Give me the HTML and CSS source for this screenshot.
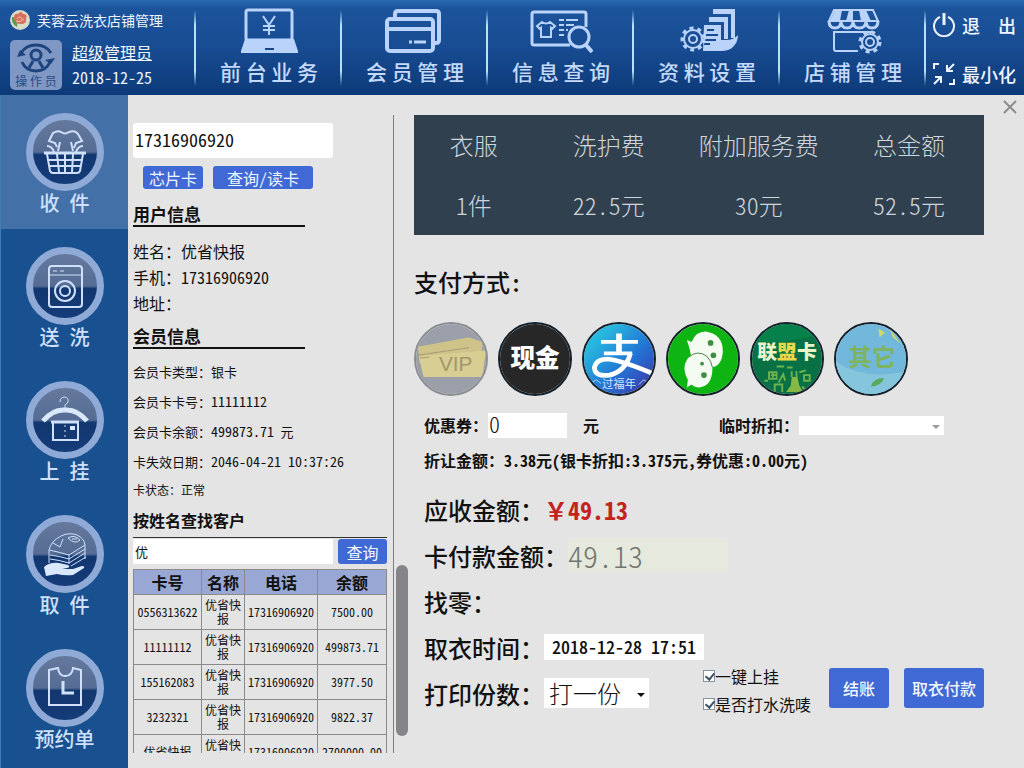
FILE: index.html
```html
<!DOCTYPE html>
<html lang="zh-CN">
<head>
    <meta charset="UTF-8">
    <meta name="viewport" content="width=device-width, initial-scale=1.0">
    <title>芙蓉云洗衣店铺管理</title>
    <link rel="stylesheet" href="styles.css">
</head>
<body>
    <header class="header">
        <div class="brand">
            <div class="brand-title">
                <svg class="brand-logo" viewBox="0 0 20 20">
                    <circle cx="10" cy="10" r="10" fill="#d9dccb"/>
                    <path d="M2 7 Q1 14 7 17 L8 8Z" fill="#5d9a52"/>
                    <path d="M4 8 Q4 3 8 4 Q11 0 13 4 Q18 4 16 9 Q17 14 11 14 Q5 14 4 8Z" fill="#d8705c"/>
                    <path d="M7 9 Q10 5 12 9 M6 11 Q10 13 14 9" fill="none" stroke="#f4c5b5"/>
                </svg>
                <span>芙蓉云洗衣店铺管理</span>
            </div>
            <div class="user">
                <div class="badge">
                    <svg viewBox="0 0 40 30">
                        <g fill="none" stroke="#1d447f" stroke-width="3">
                            <circle cx="20" cy="12" r="5"/>
                            <path d="M5 10 Q10 2 20 2 Q30 2 35 10"/>
                            <path d="M6 19 Q10 28 20 28 Q30 28 34 19"/>
                            <path d="M13 25 L17 18 M27 25 L23 18"/>
                        </g>
                        <path d="M1 14 L4 7 L10 12Z M39 15 L35 21 L29 17Z" fill="#1d447f"/>
                    </svg>
                    <span>操 作 员</span>
                </div>
                <div class="user-info">
                    <a href="#">超级管理员</a>
                    <span>2018-12-25</span>
                </div>
            </div>
        </div>
        <nav class="nav">
            <a href="#">
                <svg viewBox="0 0 64 48">
                    <rect x="9" y="2" width="46" height="30" rx="2" class="line"/>
                    <path d="M8 31 H57 L61 43 V45 H4 V43Z" class="solid"/>
                    <path d="M28 41 H37" stroke="#164788" stroke-width="2"/>
                    <path d="M26 8 L32 17 L38 8 M32 17 V27 M26 18 H38 M26 22 H38" class="line thin"/>
                </svg>
                <span>前 台 业 务</span>
            </a>
            <a href="#">
                <svg viewBox="0 0 64 48">
                    <path d="M12 9 V6 Q12 3 15 3 H53 Q56 3 56 6 V32 Q56 35 53 35 H51" class="line wide"/>
                    <rect x="4" y="11" width="46" height="32" rx="3" class="line wide"/>
                    <path d="M4 21 H50" class="line wide"/>
                    <path d="M26 34 H29 M31 34 H43" class="line"/>
                </svg>
                <span>会 员 管 理</span>
            </a>
            <a href="#">
                <svg viewBox="0 0 64 48">
                    <path d="M41 37 H5 Q3 37 3 35 V6 Q3 4 5 4 H55 Q57 4 57 6 V19" class="line"/>
                    <path d="M13 14 Q17 17 21 14 L26 18 L23 21 L22 20 V29 H12 V20 L11 21 L8 18Z" class="line thin"/>
                    <path d="M30 12 H35 M37 12 H49 M30 17 H35 M37 17 H45 M30 22 H35 M30 27 H35 M37 22 H39" class="line thin"/>
                    <circle cx="50" cy="29" r="10" class="line"/>
                    <path d="M57 37 L63 44" class="line wide"/>
                </svg>
                <span>信 息 查 询</span>
            </a>
            <a href="#">
                <svg viewBox="0 0 64 48">
                    <path d="M38 1 H60 V30 H56 V6 H38Z" class="solid"/>
                    <path d="M34 9 H53 V31 H49 V14 H34Z" class="solid"/>
                    <path d="M29 17 H46 V32 H51 Q59 32 63 27 Q63 34 58 39 Q54 43 46 43 H28Z" class="solid"/>
                    <path d="M32 22 H39 M31 27 H43 M29 32 H41 M29 36 H35" stroke="#174a8e" stroke-width="2"/>
                    <circle cx="18" cy="31" r="4" class="line thin"/>
                    <circle cx="18" cy="31" r="9" class="line thin"/>
                    <circle cx="18" cy="31" r="11" class="line teeth"/>
                </svg>
                <span>资 料 设 置</span>
            </a>
            <a href="#">
                <svg viewBox="0 0 64 48">
                    <path d="M13 2 H52 L57 13 H8Z" class="line thin"/>
                    <path d="M14 2 H21 L19 13 H9Z M28 2 H32 V13 H25Z M38 2 H45 L50 13 H40Z" class="solid"/>
                    <path d="M8 13 Q8 20 14 20 Q20 20 20 13 Q20 20 26 20 Q32 20 32 13 Q32 20 38 20 Q45 20 45 13 Q45 20 51 20 Q57 20 57 13" class="line"/>
                    <path d="M37 43 H15 Q13 43 13 41 V24 H52" class="line thin"/>
                    <circle cx="49" cy="34" r="8" class="line thin"/>
                    <circle cx="49" cy="34" r="4" class="line thin"/>
                    <circle cx="49" cy="34" r="10" class="line teeth"/>
                </svg>
                <span>店 铺 管 理</span>
            </a>
        </nav>
        <div class="window-actions">
            <button type="button">
                <svg viewBox="0 0 24 24" fill="none" stroke="#eef5ff" stroke-width="2">
                    <path d="M8 4 A10 10 0 1 0 16 4"/>
                    <path d="M12 0 V12" stroke-width="3"/>
                </svg>
                <span>退　出</span>
            </button>
            <button type="button">
                <svg viewBox="0 0 24 24" fill="none" stroke="#eef5ff" stroke-width="2">
                    <path d="M2 7 V2 H7 M22 17 V22 H17" stroke-width="2"/>
                    <path d="M22 2 L16 8 M15 3 V9 H21 M2 22 L8 16 M3 15 H9 V21"/>
                </svg>
                <span>最小化</span>
            </button>
        </div>
    </header>

    <div class="layout">
        <nav class="sidebar">
            <a href="#" class="active">
                <span class="disc">
                    <svg viewBox="0 0 48 48">
                        <path d="M16 19 L14 15 L8 13 L12 5 Q17 2 20 4 Q24 7 28 4 Q34 2 37 6 L41 13 L35 15 L33 20" class="line"/>
                        <path d="M19 14 L17 23 M30 14 L32 23 M6 18 Q11 18 13 24 M42 18 Q37 18 35 24" class="line"/>
                        <path d="M3 25 H45" class="line wide"/>
                        <path d="M6 26 L9 43 Q10 45 12 45 H36 Q38 45 39 43 L42 26 M16 26 L18 44 M24 26 V44 M32 26 L31 44 M8 32 H40 M9 38 H39" class="line"/>
                    </svg>
                </span>
                <span>收&ensp;件</span>
            </a>
            <a href="#">
                <span class="disc">
                    <svg viewBox="0 0 48 48">
                        <rect x="8" y="4" width="33" height="41" rx="3" class="line"/>
                        <path d="M8 13 H41 M12 9 H16 M19 9 H23" class="line thin"/>
                        <circle cx="24" cy="29" r="10" class="line"/>
                        <circle cx="24" cy="29" r="5" class="line"/>
                    </svg>
                </span>
                <span>送&ensp;洗</span>
            </a>
            <a href="#">
                <span class="disc">
                    <svg viewBox="0 0 48 48">
                        <path d="M19 6 Q19 1 24 1 Q28 2 27 6 Q26 8 24 9 V14" class="line thin"/>
                        <path d="M2 25 Q12 13 24 14 Q36 13 46 25" fill="none" stroke="#dae8fc" stroke-width="5"/>
                        <path d="M10 26 H38" class="line wide"/>
                        <path d="M12 26 V44 H37 V26" class="line"/>
                        <path d="M24 29 V41" class="line thin" stroke-dasharray="2 3"/>
                        <rect x="29" y="30" width="5" height="4" class="solid"/>
                    </svg>
                </span>
                <span>上&ensp;挂</span>
            </a>
            <a href="#">
                <span class="disc">
                    <svg viewBox="0 0 48 48">
                        <path d="M8 20 Q10 11 20 6 Q28 2 36 5 Q43 8 44 15 L28 25 Q18 22 8 20Z M12 13 L19 17 L22 9 M27 8 Q33 4 39 10 Q34 15 27 8 M31 9 H36" class="line thin"/>
                        <path d="M8 20 V33 M28 25 V34 M9 25 Q18 26 28 29 L44 19 M9 29 Q18 30 28 33 L44 23 M30 36 L45 27 M44 15 V29" class="line thin"/>
                        <path d="M3 37 Q9 32 18 33 L27 35 Q30 37 26 38 L21 39 L32 39 L41 36 Q44 36 43 38 L32 45 Q24 46 16 44 L5 46Z" class="solid"/>
                    </svg>
                </span>
                <span>取&ensp;件</span>
            </a>
            <a href="#">
                <span class="disc">
                    <svg viewBox="0 0 48 48">
                        <path d="M8 6 L17 4 Q18 12 24 12 Q31 12 32 4 L40 6 V41 H8Z" class="line"/>
                        <path d="M22 17 V29 H33" class="line wide"/>
                    </svg>
                </span>
                <span>预约单</span>
            </a>
        </nav>

        <main class="content">
            <button type="button" class="close" aria-label="关闭">
                <svg viewBox="0 0 14 14"><path d="M1 1 L13 13 M13 1 L1 13"/></svg>
            </button>

            <section class="customer">
                <input type="text" class="phone" value="17316906920" aria-label="手机号">
                <div class="card-buttons">
                    <button type="button" class="btn chip">芯片卡</button>
                    <button type="button" class="btn read">查询/读卡</button>
                </div>
                <h2>用户信息</h2>
                <ul class="user-list">
                    <li>姓名：优省快报</li>
                    <li>手机：17316906920</li>
                    <li>地址：</li>
                </ul>
                <h2>会员信息</h2>
                <ul class="card-list">
                    <li>会员卡类型：银卡</li>
                    <li>会员卡卡号：<span class="num">11111112</span></li>
                    <li>会员卡余额：<span class="num">499873.71</span> 元</li>
                    <li>卡失效日期：<span class="num">2046-04-21 10:37:26</span></li>
                    <li class="status">卡状态：正常</li>
                </ul>
                <h3><label for="customerName">按姓名查找客户</label></h3>
                <div class="search">
                    <input type="text" id="customerName" value="优">
                    <button type="button" class="btn">查询</button>
                </div>
                <table class="customers">
                    <thead>
                        <tr><th class="col-card">卡号</th><th class="col-name">名称</th><th class="col-phone">电话</th><th>余额</th></tr>
                    </thead>
                    <tbody>
                        <tr><td>0556313622</td><td>优省快报</td><td>17316906920</td><td>7500.00</td></tr>
                        <tr><td>11111112</td><td>优省快报</td><td>17316906920</td><td>499873.71</td></tr>
                        <tr><td>155162083</td><td>优省快报</td><td>17316906920</td><td>3977.50</td></tr>
                        <tr><td>3232321</td><td>优省快报</td><td>17316906920</td><td>9822.37</td></tr>
                        <tr><td>优省快报</td><td>优省快报</td><td>17316906920</td><td>2700000.00</td></tr>
                    </tbody>
                </table>
            </section>
            <div class="scroll-thumb"></div>

            <section class="checkout">
                <table class="summary">
                    <thead>
                        <tr><th class="col-count">衣服</th><th>洗护费</th><th>附加服务费</th><th>总金额</th></tr>
                    </thead>
                    <tbody>
                        <tr><td>1件</td><td>22.5元</td><td>30元</td><td>52.5元</td></tr>
                    </tbody>
                </table>

                <h1>支付方式:</h1>
                <div class="pay-methods">
                    <button type="button" class="vip">
                        <svg viewBox="0 0 74 74">
                            <rect width="74" height="74" fill="#9a9fa9"/>
                            <path d="M2 24 L56 14 L70 19 V40 L4 42Z" fill="#cfc389"/>
                            <path d="M3 34 L74 28 L70 56 L8 56Z" fill="#d8ce94"/>
                            <path d="M2 33 L56 25 M4 36 L14 35" stroke="#a39a77" fill="none"/>
                            <text x="42" y="50" text-anchor="middle" class="vip-text">VIP</text>
                        </svg>
                    </button>
                    <button type="button">
                        <svg viewBox="0 0 74 74">
                            <rect width="74" height="74" fill="#272727"/>
                            <text x="37" y="45" text-anchor="middle" class="cash-text">现金</text>
                        </svg>
                    </button>
                    <button type="button" aria-label="支付宝">
                        <svg viewBox="0 0 74 74">
                            <defs>
                                <linearGradient id="alipay" x1="0" y1="0" x2="1" y2="1">
                                    <stop offset="20%" stop-color="#27b8df"/>
                                    <stop offset="60%" stop-color="#2372d3"/>
                                    <stop offset="90%" stop-color="#3b3fae"/>
                                </linearGradient>
                            </defs>
                            <rect width="74" height="74" fill="url(#alipay)"/>
                            <g fill="none" stroke="#fff" stroke-width="5">
                                <path d="M37 10 V32" stroke-width="6"/>
                                <path d="M18 19 H57 M21 31 H51" stroke-width="4"/>
                                <path d="M49 31 Q44 50 27 54 Q11 56 11 46 Q13 37 25 37 Q38 38 72 52"/>
                            </g>
                            <path d="M8 62 L13 59 L18 63 M58 64 L63 59 L68 62" fill="none" stroke="#b6d2fa"/>
                            <text x="37" y="68" text-anchor="middle" class="alipay-text">过福年</text>
                        </svg>
                    </button>
                    <button type="button" aria-label="微信支付">
                        <svg viewBox="0 0 74 74">
                            <rect width="74" height="74" fill="#0eb512"/>
                            <path d="M20 17 L25 19 Q29 8 40 8 Q58 11 58 29 Q57 45 45 46 Q25 45 23 27Z" fill="#f4fbf1"/>
                            <path d="M20 67 L21 59 Q16 50 18 42 Q22 31 32 31 Q45 33 47 46 Q47 66 33 67 Q28 67 25 64Z" fill="#f4fbf1"/>
                            <path d="M22 35 Q31 27 41 34 Q46 39 47 46" fill="none" stroke="#477b46"/>
                            <g fill="#418d45"><circle cx="45" cy="20" r="3"/><circle cx="48" cy="33" r="3"/><circle cx="36" cy="42" r="2"/><circle cx="38" cy="54" r="3"/></g>
                        </svg>
                    </button>
                    <button type="button">
                        <svg viewBox="0 0 74 74">
                            <rect width="74" height="74" fill="#077044"/>
                            <path d="M0 0 H74 V10 Q37 22 0 18Z" fill="#06814c"/>
                            <text x="37" y="37" text-anchor="middle" class="union-text">联<tspan fill="#e5d94a">盟</tspan>卡</text>
                            <g fill="none" stroke="#6eb24f" stroke-width="2">
                                <path d="M26 45 H34 M37 46 H43 M18 51 H26 V58 H18Z M22 51 V58 M28 62 L33 53 L35 60 M50 51 L57 49 M55 54 H61 V60 H55Z M24 72 V64 H32 V72 M13 60 H17 M20 54 H25 M42 50 V56 M47 50 V56 M53 66 L58 72"/>
                            </g>
                            <path d="M36 72 L41 65 L42 56 H48 L50 65 L54 72Z" fill="#86b943"/>
                        </svg>
                    </button>
                    <button type="button">
                        <svg viewBox="0 0 74 74">
                            <rect width="74" height="74" fill="#72b7dc"/>
                            <path d="M0 74 V40 Q30 60 74 50 V74Z" fill="#86c6dc"/>
                            <path d="M45 5 L52 9 L46 14Z M57 5 L68 21 L60 14Z" fill="#cbdc64"/>
                            <path d="M37 66 Q39 57 51 57 Q47 66 37 66Z" fill="#5aa85c"/>
                            <text x="38" y="44" text-anchor="middle" class="other-text">其它</text>
                        </svg>
                    </button>
                </div>

                <form class="bill">
                    <div class="row coupon-row">
                        <label for="coupon">优惠券：</label>
                        <input type="text" id="coupon" value="0">
                        <span class="unit">元</span>
                        <label for="discount" class="discount-label">临时折扣：</label>
                        <div class="select discount">
                            <select id="discount"><option></option></select>
                        </div>
                    </div>
                    <p class="row discount-row">折让金额：3.38元(银卡折扣:3.375元,券优惠:0.00元)</p>
                    <div class="row"><span>应收金额：</span><strong class="due"><span class="full">￥</span>49.13</strong></div>
                    <div class="row">
                        <label for="cardPay">卡付款金额：</label>
                        <input type="text" id="cardPay" value="49.13" readonly>
                    </div>
                    <div class="row">找零：</div>
                    <div class="row">
                        <label for="pickup">取衣时间：</label>
                        <input type="text" id="pickup" value="2018-12-28 17:51">
                    </div>
                    <div class="row">
                        <label for="copies">打印份数：</label>
                        <div class="select copies">
                            <select id="copies"><option>打一份</option></select>
                        </div>
                        <div class="checks">
                            <label><input type="checkbox" checked>一键上挂</label>
                            <label><input type="checkbox" checked>是否打水洗唛</label>
                        </div>
                        <div class="submit">
                            <button type="button" class="btn settle">结账</button>
                            <button type="button" class="btn pay">取衣付款</button>
                        </div>
                    </div>
                </form>
            </section>
        </main>
    </div>
</body>
</html>
```
FILE: styles.css
```css
* {
    box-sizing: border-box;
}

body {
    margin: 0;
    height: 100vh;
    display: flex;
    flex-direction: column;
    overflow: hidden;
    background-color: #e4e4e4;
    color: #111;
    font-family: "Noto Sans CJK SC", sans-serif;
    font-size: 16px;
    /* half-width digits, so numbers line up with the characters */
    font-feature-settings: "hwid";
}

a {
    color: inherit;
    text-decoration: none;
}

button,
input,
select {
    font: inherit;
    font-feature-settings: inherit;
    color: inherit;
    border: none;
    margin: 0;
    padding: 0;
}

button {
    cursor: pointer;
}

h1, h2, h3, p, ul {
    margin: 0;
    padding: 0;
}

ul {
    list-style: none;
}

svg {
    display: block;
}

/* shared icon strokes */
.line {
    fill: none;
    stroke: #b9d3fa;
    stroke-width: 3;
}

.line.thin {
    stroke-width: 2;
}

.line.wide {
    stroke-width: 4;
}

.line.teeth {
    stroke-dasharray: 4 4;
}

.solid {
    fill: #b9d3fa;
}

/* header */
.header {
    flex: none;
    display: flex;
    height: 95px;
    background: linear-gradient(#2a6bb2 0, #1c549c 8px, #184c93 45px, #0d3a78 100%);
    color: #eef5ff;
}

.brand {
    width: 194px;
    padding: 10px 0 0 10px;
}

.brand-title {
    display: flex;
    align-items: center;
    gap: 7px;
    height: 20px;
    font-size: 14px;
}

.brand-logo {
    width: 20px;
    height: 20px;
}

.user {
    display: flex;
    gap: 10px;
    margin-top: 10px;
}

.badge {
    width: 52px;
    height: 50px;
    padding-top: 3px;
    border-radius: 5px;
    background-color: #7f97c4;
    color: #294a83;
    font-size: 12px;
    line-height: 16px;
    text-align: center;
    font-feature-settings: normal;
}

.badge svg {
    width: 40px;
    height: 30px;
    margin: 0 auto;
}

.user-info {
    display: flex;
    flex-direction: column;
    line-height: 25px;
}

.user-info a {
    text-decoration: underline;
}

.nav {
    flex: 1;
    display: flex;
}

.nav a {
    flex: 1;
    display: flex;
    flex-direction: column;
    align-items: center;
    padding: 8px 0 0 4px;
    color: #c3dafc;
    font-size: 21px;
    font-weight: 500;
    line-height: 30px;
    font-feature-settings: normal;
    background: linear-gradient(transparent, #b5e2f5 20%, #b5e2f5 80%, transparent) left 10px / 2px 76px no-repeat;
}

.nav svg {
    width: 64px;
    height: 48px;
}

.window-actions {
    width: 100px;
    display: flex;
    flex-direction: column;
    justify-content: space-between;
    padding: 11px 0 7px 8px;
    background: linear-gradient(transparent, #b5e2f5 20%, #b5e2f5 80%, transparent) left 10px / 2px 76px no-repeat;
}

.window-actions button {
    display: flex;
    align-items: center;
    gap: 6px;
    background: none;
    font-size: 18px;
    font-weight: 500;
    line-height: 28px;
    font-feature-settings: normal;
}

.window-actions svg {
    width: 24px;
    height: 24px;
}

/* sidebar */
.layout {
    flex: 1;
    display: flex;
    min-height: 0;
}

.sidebar {
    width: 128px;
    flex: none;
    background-color: #195090;
    border-left: 1px solid #3f7cb8;
}

.sidebar a {
    display: flex;
    flex-direction: column;
    align-items: center;
    height: 134px;
    padding-top: 18px;
    color: #cfe0fb;
    font-size: 20px;
    font-weight: 500;
    line-height: 24px;
}

.sidebar .active {
    background-color: #4470a8;
}

.disc {
    display: flex;
    align-items: center;
    justify-content: center;
    width: 78px;
    height: 78px;
    border: 7px solid #8faad6;
    border-radius: 50%;
    background: linear-gradient(#66799d, #566c94 50%, #12366f 54%, #153c79);
}

.disc svg {
    width: 48px;
    height: 48px;
}

.disc .line {
    stroke: #cfe0fb;
    stroke-width: 2;
}

.disc .line.thin {
    stroke-width: 1;
}

.disc .line.wide {
    stroke-width: 3;
}

.disc .solid {
    fill: #dae8fc;
}

/* content */
.content {
    position: relative;
    flex: 1;
    display: flex;
    padding: 20px 40px 15px 5px;
}

.close {
    position: absolute;
    top: 5px;
    right: 7px;
    background: none;
}

.close svg {
    width: 14px;
    height: 14px;
    stroke: #8c8c8c;
    stroke-width: 2;
}

.btn {
    background-color: #4069d6;
    color: #f2f7ff;
    border-radius: 3px;
}

.customer {
    flex: none;
    width: 261px;
    padding: 8px 6px 0 0;
    border-right: 1px solid #7d7d7d;
    overflow: hidden;
}

.customer .phone {
    display: block;
    width: 200px;
    height: 35px;
    padding: 0 2px 4px;
    border-radius: 3px;
    background-color: #fff;
    font-size: 18px;
}

.card-buttons {
    display: flex;
    gap: 10px;
    margin: 8px 0 0 10px;
}

.card-buttons .btn {
    height: 23px;
    line-height: 22px;
}

.chip {
    width: 60px;
}

.read {
    width: 100px;
}

.customer h2 {
    width: 172px;
    height: 24px;
    margin-top: 14px;
    border-bottom: 2px solid #111;
    font-size: 17px;
    line-height: 22px;
}

.user-list {
    padding-top: 11px;
    line-height: 26px;
}

.user-list + h2 {
    margin-top: 9px;
}

.card-list {
    padding-top: 8px;
    font-size: 13px;
    line-height: 30px;
}

.card-list .num {
    font-size: 14px;
    line-height: 20px;
}

.card-list .status {
    font-size: 12px;
    line-height: 26px;
}

.customer h3 {
    height: 31px;
    margin-top: 4px;
    border-bottom: 1px solid #333;
    font-size: 16px;
    line-height: 26px;
}

.search {
    display: flex;
    gap: 5px;
    margin: 1px 0 5px;
}

.search input {
    flex: 1;
    min-width: 0;
    height: 25px;
    padding: 0 2px;
    background-color: #fff;
    font-size: 13px;
}

.search .btn {
    width: 49px;
    height: 25px;
    line-height: 24px;
}

.customers {
    width: 100%;
    table-layout: fixed;
    border-collapse: collapse;
    font-size: 12px;
    line-height: 14px;
    text-align: center;
}

.customers th,
.customers td {
    height: 35px;
    padding: 0 2px;
    border: 1px solid #8a8a8a;
}

.customers th {
    height: 25px;
    padding: 0;
    background-color: #98a7d3;
    font-size: 16px;
    line-height: 24px;
}

.col-card {
    width: 68px;
}

.col-name {
    width: 43px;
}

.col-phone {
    width: 73px;
}

.scroll-thumb {
    position: absolute;
    left: 268px;
    bottom: 32px;
    width: 12px;
    height: 171px;
    border-radius: 6px;
    background-color: #858589;
}

/* checkout */
.checkout {
    flex: 1;
    margin-left: 20px;
}

.summary {
    width: 100%;
    table-layout: fixed;
    border-collapse: collapse;
    background-color: #30404f;
    color: #cdd6dc;
    font-size: 24px;
    text-align: center;
}

.summary th,
.summary td {
    height: 60px;
    padding: 0 0 2px;
    font-weight: 300;
}

.summary .col-count {
    width: 21%;
}

.checkout h1 {
    margin: 32px 0 25px;
    font-size: 24px;
    font-weight: 500;
    line-height: 30px;
}

.pay-methods {
    display: flex;
    gap: 10px;
}

.pay-methods button {
    width: 74px;
    height: 74px;
    border: 2px solid #14202a;
    border-radius: 50%;
    background: none;
    overflow: hidden;
}

.pay-methods .vip {
    border-color: #8b8d92;
}

.pay-methods svg {
    width: 70px;
    height: 70px;
}

.vip-text {
    font-family: "Liberation Sans", sans-serif;
    font-size: 22px;
    fill: #a1976d;
}

.cash-text {
    font-size: 26px;
    font-weight: 900;
    fill: #fff;
}

.alipay-text {
    font-size: 12px;
    fill: #d3e6ff;
}

.union-text {
    font-size: 21px;
    font-weight: 900;
    fill: #e8f5c8;
}

.other-text {
    font-size: 25px;
    font-weight: 700;
    fill: #7fb45f;
}

.bill {
    margin-top: 14px;
    padding-left: 10px;
    font-size: 24px;
    font-weight: 500;
}

.row {
    display: flex;
    align-items: center;
    height: 46px;
}

.row input[type="text"] {
    background-color: #fff;
}

.coupon-row {
    height: 30px;
    font-size: 16px;
    font-weight: 700;
}

.row #coupon {
    width: 79px;
    height: 25px;
    padding: 0 1px 4px;
    font-size: 22px;
    font-weight: 300;
    line-height: 21px;
}

.unit {
    margin-left: 16px;
}

.discount-label {
    margin-left: 120px;
}

.select {
    position: relative;
    background-color: #fff;
}

/* drop-down arrow */
.select::after {
    content: "";
    position: absolute;
    top: 50%;
    right: 4px;
    border: 4px solid transparent;
    border-top-color: #111;
    pointer-events: none;
}

.select select {
    display: block;
    width: 100%;
    height: 100%;
    appearance: none;
    background: none;
}

.discount {
    width: 145px;
    height: 19px;
}

.discount::after {
    border-top-color: #999;
}

.discount-row {
    height: 40px;
    margin-bottom: 6px;
    font-size: 16px;
    font-weight: 700;
}

.due {
    color: #c52320;
    font-weight: 700;
}

.full {
    font-feature-settings: normal;
}

.row #cardPay {
    width: 160px;
    height: 34px;
    background-color: #e6e9de;
    color: #72756e;
    font-size: 30px;
    font-weight: 300;
}

.row #pickup {
    width: 160px;
    height: 26px;
    padding: 0 8px 2px;
    font-size: 18px;
}

.copies {
    width: 105px;
    height: 30px;
    padding-left: 5px;
    font-weight: 300;
}

.copies select {
    line-height: 26px;
}

.checks {
    display: flex;
    flex-direction: column;
    margin-left: 54px;
    padding-bottom: 6px;
    font-size: 16px;
    font-weight: 400;
    line-height: 28px;
}

.checks label {
    display: flex;
    align-items: center;
}

.checks input {
    appearance: none;
    width: 12px;
    height: 12px;
    border: 1px solid #8795a1;
    background: #fff;
}

.checks input:checked::before {
    content: "";
    display: block;
    width: 4px;
    height: 7px;
    margin-left: 3px;
    border: solid #3c5565;
    border-width: 0 2px 2px 0;
    transform: rotate(40deg);
}

.submit {
    display: flex;
    gap: 15px;
    margin-left: auto;
    padding-bottom: 10px;
}

.submit .btn {
    height: 40px;
    font-size: 16px;
    font-weight: 500;
}

.settle {
    width: 60px;
}

.pay {
    width: 80px;
}
```
